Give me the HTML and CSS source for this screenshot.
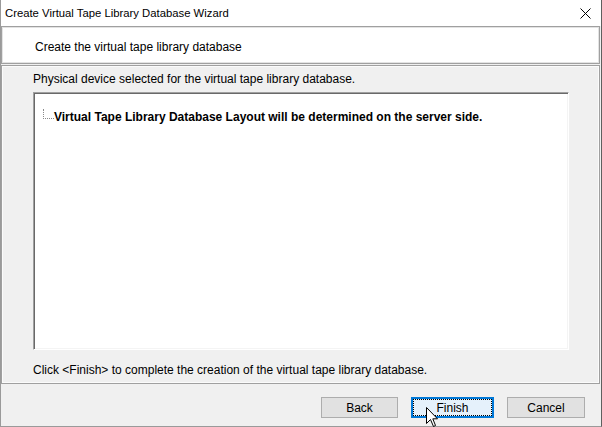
FILE: index.html
```html
<!DOCTYPE html>
<html>
<head>
<meta charset="utf-8">
<link rel="stylesheet" href="styles.css">
</head>
<body>
<div class="window">
  <div class="titlebar">
    <span class="title">Create Virtual Tape Library Database Wizard</span>
    <svg class="close" width="11" height="11" viewBox="0 0 11 11"><path d="M0.5 0.5 L10.5 10.5 M10.5 0.5 L0.5 10.5" stroke="#000" stroke-width="1" fill="none"/></svg>
  </div>
  <div class="header"><span>Create the virtual tape library database</span></div>
  <div class="main">
    <div class="label">Physical device selected for the virtual tape library database.</div>
    <div class="tree">
      <div class="node"><span class="connector"></span><span class="node-text">Virtual Tape Library Database Layout will be determined on the server side.</span></div>
    </div>
    <div class="label bottom">Click &lt;Finish&gt; to complete the creation of the virtual tape library database.</div>
  </div>
  <div class="buttons">
    <button class="btn back">Back</button>
    <button class="btn finish">Finish</button>
    <button class="btn cancel">Cancel</button>
  </div>
  <svg class="cursor" width="13" height="20" viewBox="0 0 13 20"><path d="M0.5 0.5 L0.5 16.5 L4.5 12.5 L7.5 19.5 L9.5 18.5 L6.8 11.8 L11.5 11.8 Z" fill="#fff" stroke="#000" stroke-width="1" stroke-linejoin="miter"/></svg>
</div>
</body>
</html>
```
FILE: styles.css
```css
html, body {
  margin: 0;
  padding: 0;
  width: 602px;
  height: 427px;
  overflow: hidden;
  background: #f0f0f0;
  font-family: "Liberation Sans", Arial, sans-serif;
  font-size: 12px;
  color: #000;
}
.window {
  position: relative;
  width: 602px;
  height: 427px;
  box-sizing: border-box;
  border-left: 1px solid #9a9a9a;
  border-right: 1px solid #5f5f5f;
  border-bottom: 1px solid #9a9a9a;
  display: flex;
  flex-direction: column;
  background: #f0f0f0;
}
.titlebar {
  height: 26px;
  flex: none;
  background: #fff;
  display: flex;
  align-items: center;
  justify-content: space-between;
  padding: 0 10px 0 4px;
}
.title {
  font-size: 11.3px;
  line-height: 14px;
}
.close {
  display: block;
  margin-top: 1px;
}
.header {
  flex: none;
  height: 38px;
  box-sizing: border-box;
  margin: 0 1px 1px 0;
  border: 1px solid #a0a0a0;
  box-shadow: inset 0 0 0 1px #e3e3e3;
  background: #fff;
  padding: 13px 0 0 33px;
  line-height: 14px;
}
.main {
  flex: none;
  height: 319px;
  box-sizing: border-box;
  margin-right: 1px;
  border: 1px solid #a0a0a0;
  box-shadow: inset 0 0 0 1px #fbfbfb;
  padding: 6px 0 0 31px;
  display: flex;
  flex-direction: column;
}
.label {
  line-height: 14px;
}
.label.bottom {
  margin-top: 13px;
}
.tree {
  margin-top: 6px;
  width: 536px;
  height: 258px;
  box-sizing: border-box;
  background: #fff;
  border: 1px solid;
  border-color: #a0a0a0 #fff #fff #a0a0a0;
  box-shadow: inset 1px 1px 0 #696969, inset -1px -1px 0 #f4f4f4;
  padding: 17px 0 0 9px;
}
.node {
  display: flex;
  align-items: flex-start;
  line-height: 14px;
}
.connector {
  display: block;
  width: 10px;
  height: 9px;
  margin-top: -1px;
  border-left: 1px dotted #8a8a8a;
  border-bottom: 1px dotted #8a8a8a;
}
.node-text {
  font-weight: bold;
}
.buttons {
  flex: 1;
  display: flex;
  justify-content: flex-end;
  align-items: flex-start;
  gap: 13px;
  padding: 13px 16px 0 0;
}
.btn {
  height: 21px;
  box-sizing: border-box;
  margin: 0;
  padding: 0;
  font-family: "Liberation Sans", Arial, sans-serif;
  font-size: 12px;
  color: #000;
  background: #e1e1e1;
  border: 1px solid #adadad;
  border-radius: 0;
}
.back { width: 77px; }
.finish {
  width: 83px;
  background: #e5f1fb;
  border: 1px solid #0078d7;
  box-shadow: inset 0 0 0 1px #0078d7;
  outline: 1px dotted #000;
  outline-offset: -3px;
}
.cancel { width: 78px; }
.cursor {
  position: absolute;
  left: 425px;
  top: 407px;
}
```
